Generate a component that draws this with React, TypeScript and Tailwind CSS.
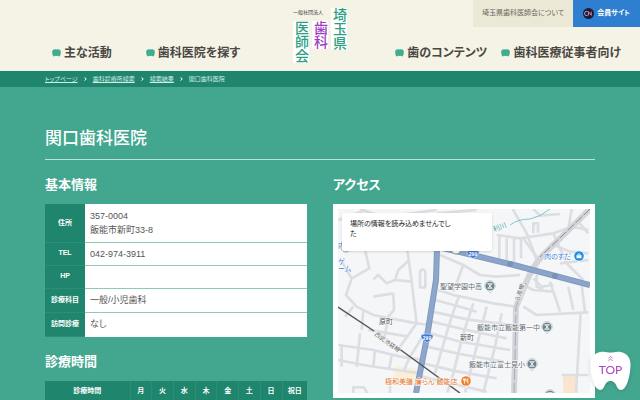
import { ChevronsUp } from 'lucide-react';
import type { ReactNode } from 'react';

const clinicInfo = [
  { label: '住所', lines: ['357-0004', '飯能市新町33-8'], height: 'h-[38px]' },
  { label: 'TEL', lines: ['042-974-3911'], height: 'h-[23px]' },
  { label: 'HP', lines: [''], height: 'h-[23px]' },
  { label: '診療科目', lines: ['一般/小児歯科'], height: 'h-6' },
  { label: '訪問診療', lines: ['なし'], height: 'h-6' },
];

const days = ['月', '火', '水', '木', '金', '土', '日', '祝日'];

const crumbs = ['トップページ', '歯科診療所検索', '検索結果'];

function ToothIcon() {
  return (
    <svg viewBox="0 0 16 14" className="h-2 w-[9px] shrink-0" fill="#3fae8e" aria-hidden="true">
      <path d="M3.500 .6C5.500 0 6.500 .8 8 .8s2.500-.8 4.500-.2C15.500 1.200 16 3.500 15.600 6.500c-.4 3-.9 6.500-3 6.700-1.400.1-1.600-1.200-2.400-1.200-.8 0-.9.500-2.200.500s-1.400-.5-2.200-.5c-.8 0-1 1.300-2.400 1.200C1.300 13 .8 9.500.4 6.500 0 3.500.5 1.200 3.500.6Z" />
    </svg>
  );
}

function NavLink({ children }: { children: ReactNode }) {
  return (
    <a href="#" className="flex items-center gap-[3px] whitespace-nowrap text-[12px] leading-4 font-bold text-[#4a4842]">
      <ToothIcon />
      {children}
    </a>
  );
}

function Logo() {
  return (
    <a href="#" aria-label="埼玉県歯科医師会" className="flex items-start gap-[3px] pt-2 text-[14px] leading-4 font-medium text-[#2f9f83]">
      <span className="flex w-[35px] flex-col">
        <span className="h-[13px] text-[5px] leading-[9px] font-normal whitespace-nowrap text-[#3c3a35]">一般社団法人</span>
        <span className="flex gap-[3px]">
          <span className="bg-white [writing-mode:vertical-rl]">医師会</span>
          <span className="self-start bg-white text-[#a03cc4] [writing-mode:vertical-rl]">歯科</span>
        </span>
      </span>
      <span className="bg-white [writing-mode:vertical-rl]">埼玉県</span>
    </a>
  );
}

function Header() {
  return (
    <header className="grid h-[71px] grid-cols-[1fr_auto_1fr] border-b border-[#dff3e8] bg-[#f5f2e6]">
      <nav className="flex items-end gap-[34px] pb-[9px] pl-[52px]">
        <NavLink>主な活動</NavLink>
        <NavLink>歯科医院を探す</NavLink>
      </nav>
      <Logo />
      <div className="flex flex-col items-end justify-between">
        <div className="flex h-[27px] text-[7px]">
          <a href="#" className="flex items-center bg-[#ece8d6] px-[9px] text-[#6b675c]">埼玉県歯科医師会について</a>
          <a href="#" className="flex items-center gap-[3px] bg-[#2f7fd1] px-[10px] font-bold text-white">
            <svg viewBox="0 0 24 24" className="size-[11px]" fill="none" aria-hidden="true">
              <circle cx="12" cy="12" r="12" fill="#1d1b3a" />
              <path d="M10 8a4.500 4.500 0 1 0 0 8" stroke="#d9d4ee" strokeWidth="2" />
              <path d="M12 16V8l6 8V8" stroke="#e58aa6" strokeWidth="2" />
            </svg>
            会員サイト
          </a>
        </div>
        <nav className="flex gap-[14px] pr-[19px] pb-[9px]">
          <NavLink>歯のコンテンツ</NavLink>
          <NavLink>歯科医療従事者向け</NavLink>
        </nav>
      </div>
    </header>
  );
}

function SchoolPin({ x, y }: { x: number; y: number }) {
  return (
    <g transform={`translate(${x} ${y})`}>
      <path d="M-5.500 0a5.500 5.500 0 1 1 11 0c0 3-4 4-5.500 7-1.500-3-5.500-4-5.500-7Z" fill="#fff" stroke="#9fb0b5" strokeWidth="0.500" />
      <circle r="4.600" fill="#6f858c" />
      <path d="M-2.500-2.200h5M-2.500 2.200h5M-1.600-2.200l3.200 4.400M1.600-2.200l-3.200 4.400" stroke="#fff" strokeWidth="0.900" />
    </g>
  );
}

function RouteBadge({ x, y }: { x: number; y: number }) {
  return (
    <g transform={`translate(${x} ${y})`}>
      <path d="M-6-3q6-2.500 12 0 1 4-6 7.500Q-7 1-6-3Z" fill="#3f78d8" stroke="#fff" strokeWidth="0.500" />
      <text y="2" fontSize="5" fontWeight="700" textAnchor="middle" fill="#fff">299</text>
    </g>
  );
}

function StreetMap() {
  return (
    <svg viewBox="0 0 252 184" preserveAspectRatio="xMidYMid slice" className="block h-[184px] w-full bg-[#f5f6f8]" role="img" aria-label="地図">
      <path d="M57 157l22 3-3 15H54z" fill="#fbf0d6" />
      <path d="M225 166h15v18h-15z" fill="#fae6cf" />

      {/* side streets, drawn on a grid three times finer */}
      <g transform="translate(-18 -9) scale(0.33333)" fill="none" stroke="#dcdee3" strokeWidth="8" strokeLinejoin="round">
        <path d="M55 60 130 32 200 50 350 30M120 27l60 20M350 40l120-10" />
        <path d="M135 150 148 205 95 235 78 285 110 320 160 345 290 370 335 375M95 235 60 175M100 320 75 350" />
        <path d="M262 150 275 245 290 370M160 238 175 225 200 250 225 240 235 210 268 180M225 240l50 5" />
        <path d="M300 262V215q8-14 16 0V262Z" />
        <path d="M220 280 222 330 200 355M160 290l60-10M205 352 190 430M290 370 240 440M130 330l-5 60M145 390l50 8 70 12" />
        <path d="M55 435 160 450 240 470 300 478M65 435V500M55 480 130 495 230 510 300 520M120 400 110 500M165 450l-5 50M215 465l-8 45" />
        <path d="M330 375 270 470 250 515M210 555v24M100 578V562h32l10 18" />
        <path d="M360 165 430 195 480 225 530 230 600 225M345 300 420 320 470 335M430 195l-30 80M355 270 400 285 520 310 585 320" />
        <path d="M338 335 440 358 575 375M335 365 440 390 560 415M330 400 420 425 570 450M320 440 420 462 550 485M310 490 400 512 530 535M305 530 400 552 500 575" />
        <path d="M418 285 395 350 365 450 345 520M460 310 430 400 400 520 382 578M500 320 480 400 455 500 435 578M545 340 525 440 490 578" />
        <path d="M578 27 620 100 650 180M530 105 600 115 700 100 755 80 805 90M538 110V175M560 115V180M582 115V185M603 118V175" />
        <path d="M755 27 745 90M640 100v-30h14v28M700 100 740 190 790 240M770 60l35 40M690 130l60 25 55 5M720 190l85-10M610 115l50 70M640 27l20 20 60-5" />
        <path d="M640 235 665 260 700 255M690 245 720 335M610 320 650 345 805 337M745 260 760 330M785 255l10 80M782 340 768 578M650 225v35l20 10" />
        <path d="M600 250 640 270 700 275M725 525h80" />
      </g>

      {/* river */}
      <path d="M172 16q8-6 20-6 10-2 20-10" fill="none" stroke="#7cc8cb" strokeWidth="1" />

      {/* Hachiko line */}
      <path d="M252 0 205 46Q194 58 188 74L178 98 177 148 176 184" fill="none" stroke="#d3d5da" strokeWidth="6" />
      <path d="M188 74L178 98 177 148 176 184" fill="none" stroke="#a9adb3" strokeWidth="1" strokeDasharray="14 3" />
      <path d="M252 0 202 48" fill="none" stroke="#8a8c90" strokeWidth="1" strokeDasharray="9 2" />

      {/* national roads */}
      <path d="M99 40 98 71 89 128 78 184" fill="none" stroke="#7f99c0" strokeWidth="6" />
      <path d="M99 40 98 71 89 128 78 184" fill="none" stroke="#8ea6ca" strokeWidth="4" />
      <path d="M100 38 122 43 172 55 252 76" fill="none" stroke="#7f99c0" strokeWidth="6" />
      <path d="M100 38 122 43 172 55 252 76" fill="none" stroke="#8ca4c9" strokeWidth="4" />
      <circle cx="172" cy="55" r="3" fill="#7892b8" />
      <circle cx="217" cy="67" r="3" fill="#7892b8" />

      {/* Seibu Ikebukuro line */}
      <path d="M0 98 36 122M60 139 122 184" fill="none" stroke="#55565a" strokeWidth="1.500" />

      {/* pins that the message card mostly hides */}
      <circle cx="118" cy="40" r="5" fill="#fff" stroke="#7d9a8c" />
      <circle cx="8" cy="38" r="5" fill="#fff" stroke="#9fb0a6" />

      <RouteBadge x={89} y={129} />
      <RouteBadge x={135} y={45} />

      <g fontSize="7" fill="#5d6b73" stroke="#fff" strokeWidth="1" paintOrder="stroke">
        <text x="41" y="115" fill="#555">原町</text>
        <text x="122" y="131" fill="#555">新町</text>
        <text x="102" y="80">聖望学園中高</text>
        <text x="139" y="121">飯能市立飯能第一中</text>
        <text x="131" y="158">飯能市立富士見小</text>
        <text x="206" y="50" fill="#3f7fd6">肉のすだ</text>
        <text x="0" y="62" fill="#3f7fd6">ーム</text>
        <text x="0" y="55" fill="#3f7fd6">ゲ</text>
        <text x="0" y="39" fill="#3f7fd6">内</text>
        <text x="47" y="175" fill="#e2762c">極和美膳 廉らん 飯能店</text>
        <text transform="translate(156 23) rotate(-22)" fill="#3b9ba5">利川</text>
        <text transform="translate(36 126) rotate(36)" fontSize="6" fill="#666">西武池袋線</text>
        <text transform="translate(181 93) rotate(-72)" fontSize="6" fill="#666">八高線</text>
      </g>

      <SchoolPin x={152} y={77} />
      <SchoolPin x={209} y={118} />
      <SchoolPin x={194} y={155} />
      <SchoolPin x={212} y={186} />
      <g transform="translate(241 47)">
        <path d="M-5.500 0a5.500 5.500 0 1 1 11 0c0 3-4 4-5.500 7-1.500-3-5.500-4-5.500-7Z" fill="#fff" />
        <circle r="4.800" fill="#1e8fe6" />
        <path d="M-2.500-.8h5v3h-5z" fill="#fff" />
        <path d="M-1.300-.8a1.300 1.500 0 0 1 2.600 0" fill="none" stroke="#fff" strokeWidth="0.800" />
      </g>
      <g transform="translate(128 172)">
        <path d="M-5.500 0a5.500 5.500 0 1 1 11 0c0 3-4 4-5.500 7-1.500-3-5.500-4-5.500-7Z" fill="#fff" />
        <circle r="4.800" fill="#f0822d" />
        <path d="M-1.500-2.500v5M-2.500-2.500v1.800h2v-1.800M1.800 2.500v-5q-1.300 1-1 3h1" fill="none" stroke="#fff" strokeWidth="0.800" />
      </g>
    </svg>
  );
}

function SectionTitle({ children }: { children: ReactNode }) {
  return <h2 className="mt-[15px] mb-[9px] text-[13px] leading-5 font-bold text-white">{children}</h2>;
}

export default function App() {
  return (
    <div className="h-screen overflow-hidden bg-[#43a78f] font-['Liberation_Sans','Noto_Sans_CJK_JP',sans-serif] [font-feature-settings:'palt']">
      <Header />

      <nav aria-label="パンくず" className="flex h-4 items-center gap-[6px] bg-[#1f856d] px-[45px] text-[6px] text-[#d5ede5]">
        {crumbs.map((c) => (
          <span key={c} className="flex items-center gap-[6px]">
            <a href="#" className="underline">{c}</a>
            <svg viewBox="0 0 6 8" className="h-1 w-[3px]" fill="none" stroke="#fff" strokeWidth="2" aria-hidden="true">
              <path d="m1 1 3.500 3L1 7" />
            </svg>
          </span>
        ))}
        <span>関口歯科医院</span>
      </nav>

      <main className="px-[45px] pt-10">
        <h1 className="border-b border-[#b9e3d6] pb-2 text-[17px] leading-6 font-medium text-white">関口歯科医院</h1>

        <div className="grid grid-cols-2 items-start gap-[26px]">
          <section>
            <SectionTitle>基本情報</SectionTitle>
            <table className="w-full border-collapse bg-white">
              <tbody>
                {clinicInfo.map((row) => (
                  <tr key={row.label} className={`${row.height} border-b border-[#8fcab9] last:border-b-0`}>
                    <th scope="row" className="w-10 border-b border-[#2a8f76] bg-[#1f856d] p-0 text-[7px] font-bold text-white">{row.label}</th>
                    <td className="py-0 pl-[5px] text-[9px] leading-[14px] text-[#555]">
                      {row.lines.map((line) => (
                        <div key={line}>{line}</div>
                      ))}
                    </td>
                  </tr>
                ))}
              </tbody>
            </table>

            <SectionTitle>診療時間</SectionTitle>
            <table className="w-full table-fixed border-collapse">
              <thead>
                <tr className="h-[22px] bg-[#1f856d] text-[7px] text-white">
                  <th scope="col" className="w-[85px] p-0 font-bold">診療時間</th>
                  {days.map((d) => (
                    <th key={d} scope="col" className="border-l border-[#2a8f76] p-0 font-bold last:w-[25px]">{d}</th>
                  ))}
                </tr>
              </thead>
            </table>
          </section>

          <section>
            <SectionTitle>アクセス</SectionTitle>
            <div className="relative bg-white p-[5px]">
              <StreetMap />
              <p className="absolute top-[9px] left-[9px] h-[38px] w-[150px] rounded-xs bg-white pt-[6px] pr-9 pl-2 text-[7px] leading-[10px] text-[#222] shadow-sm">
                場所の情報を読み込めませんでした
              </p>
            </div>
          </section>
        </div>
      </main>

      <a href="#" className="fixed right-[9px] bottom-[10px] flex h-[39px] w-[41px] flex-col items-center pt-[3px] text-[#a845c4]">
        <svg viewBox="0 0 82 78" className="absolute inset-0 size-full drop-shadow-sm" fill="#fff" aria-hidden="true">
          <path d="M20 2C30 0 34 3 41 3S52 0 62 2C76 5 82 16 81 30c-1 20-6 38-13 45-5 5-11 3-14-3-3-7-6-12-13-12s-10 5-13 12c-3 6-9 8-14 3C7 68 2 50 1 30 0 16 6 5 20 2Z" />
        </svg>
        <ChevronsUp size={9} strokeWidth={2} className="relative" />
        <span className="relative font-[Lato,sans-serif] text-[12px] leading-[14px]">TOP</span>
      </a>
    </div>
  );
}
